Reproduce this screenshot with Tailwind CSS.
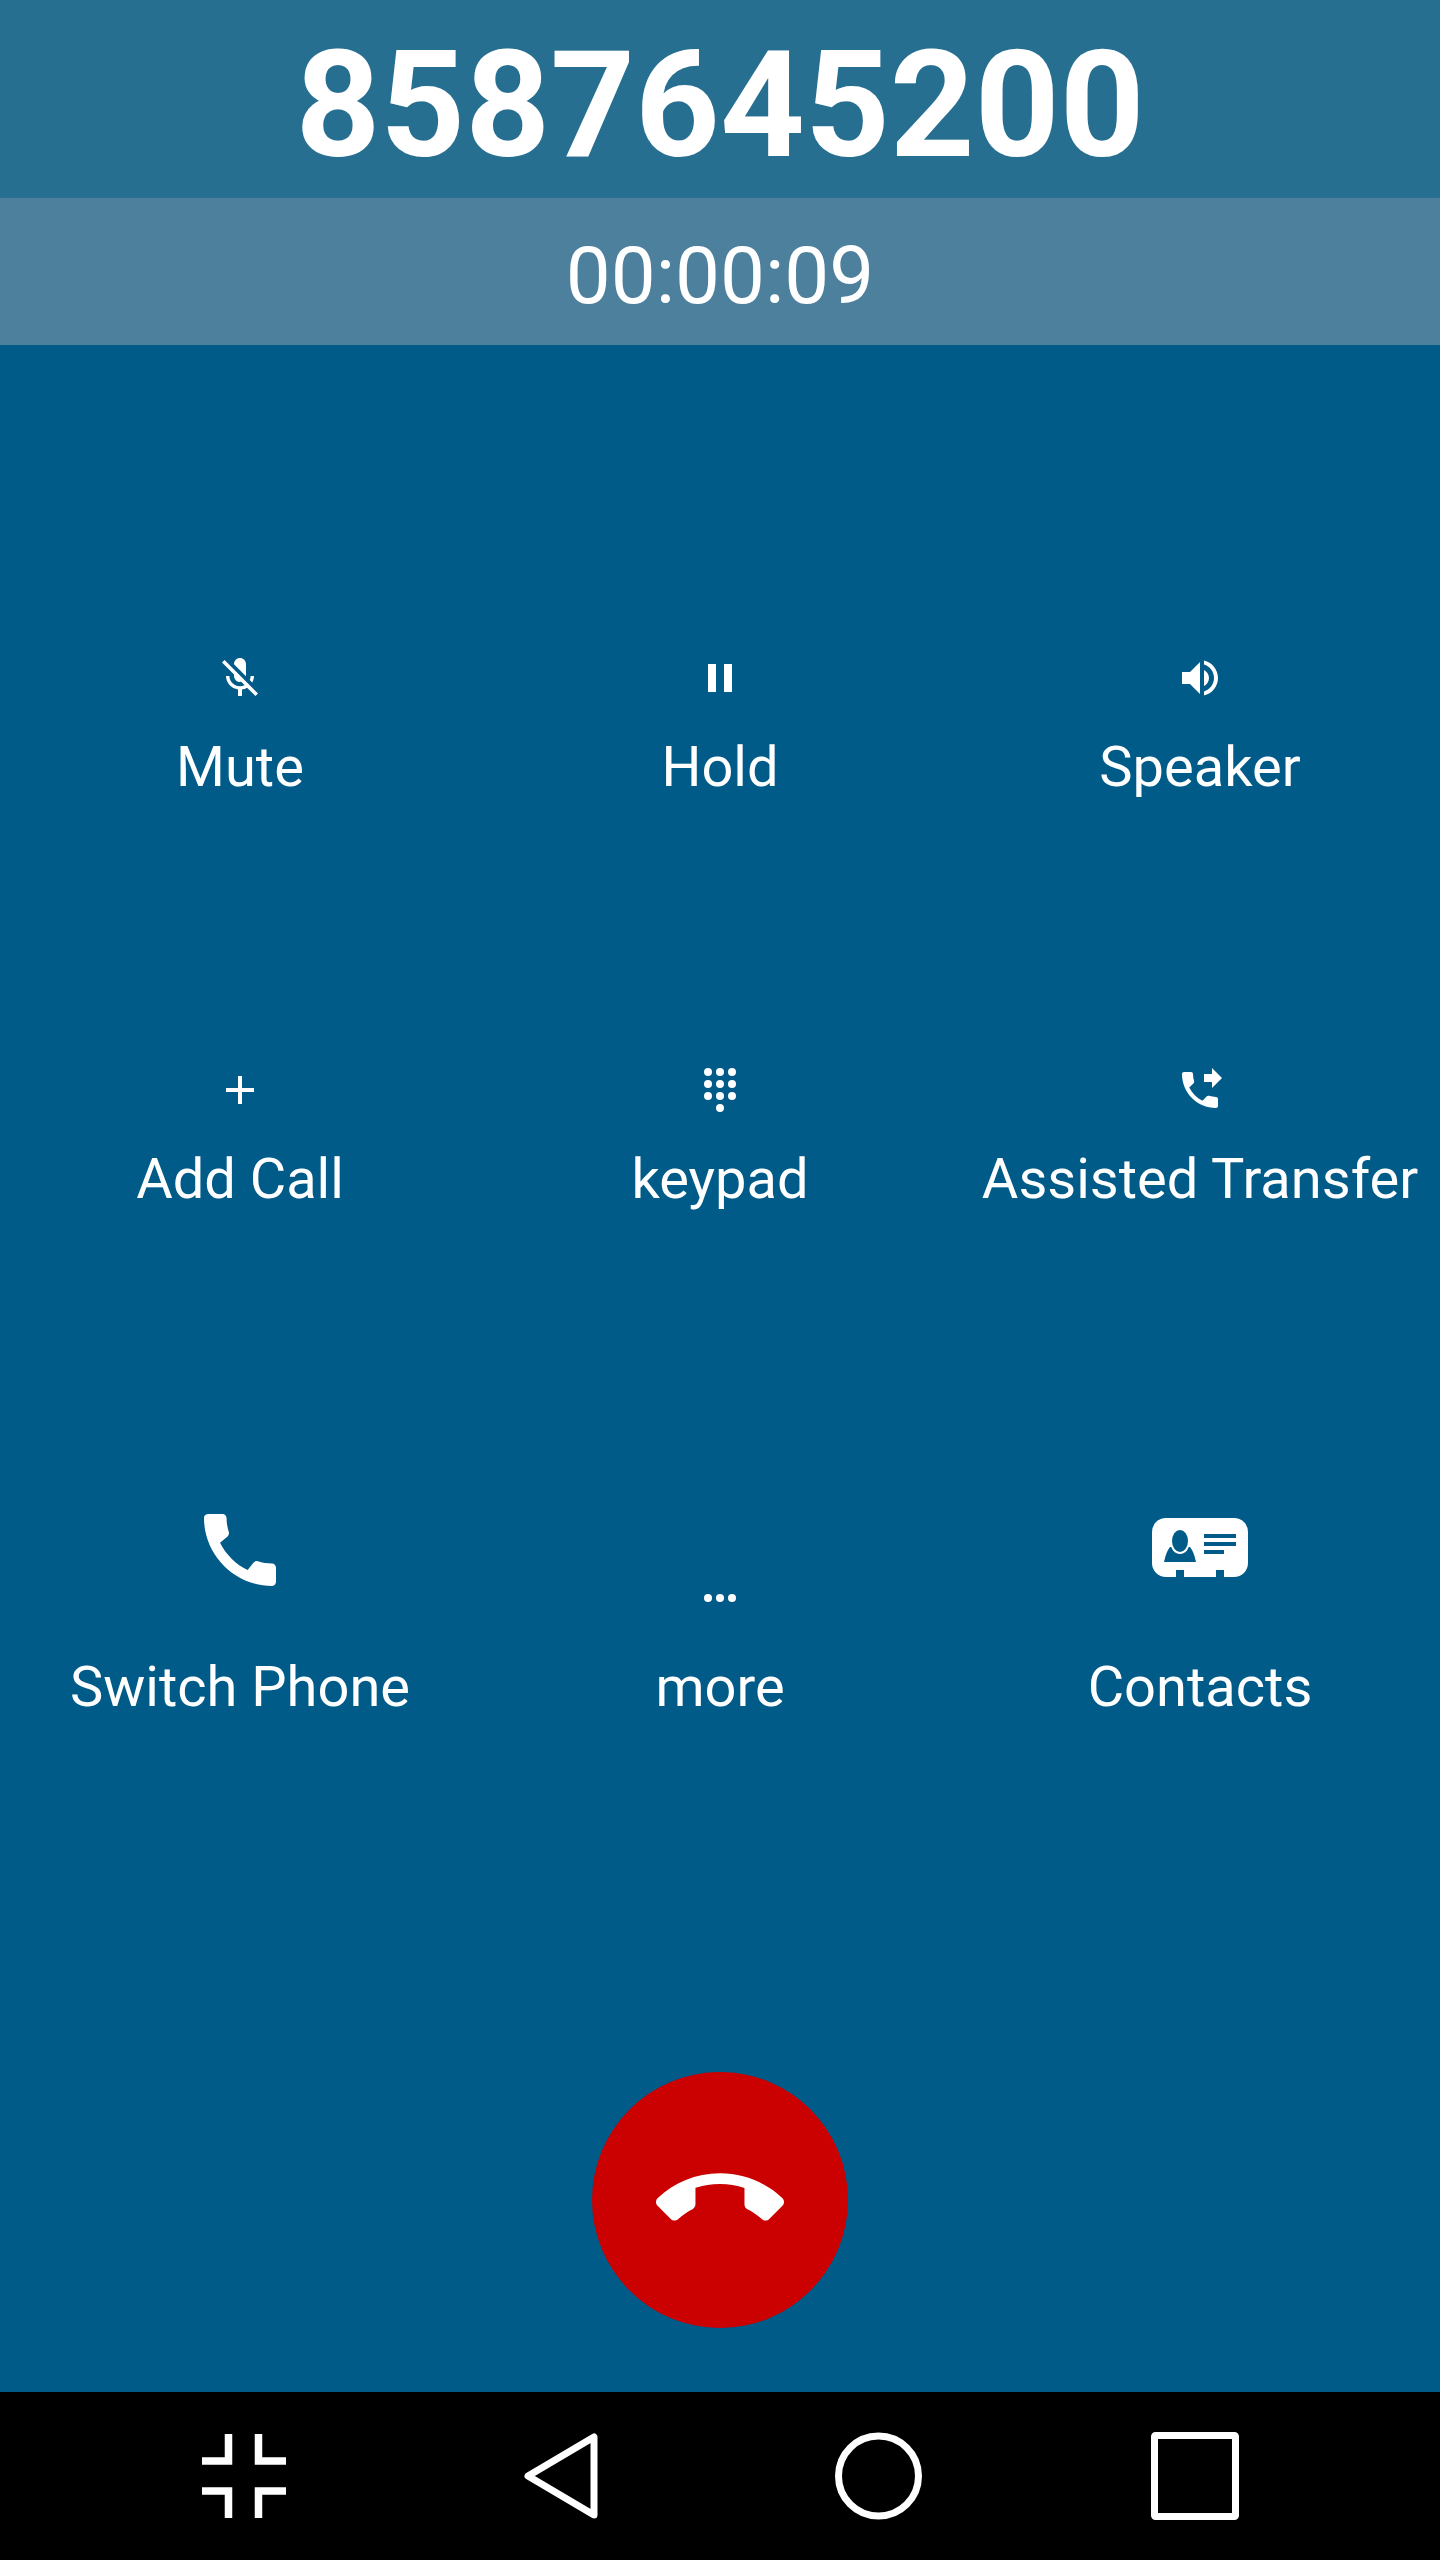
<!DOCTYPE html>
<html lang="en">
  <head>
    <meta charset="utf-8" />
    <title>Call</title>
    <script src="https://cdn.jsdelivr.net/npm/@tailwindcss/browser@4"></script>
  </head>
  <body>
    <div class="flex h-[2560px] w-[1440px] flex-col bg-[#005b88] font-['Roboto',sans-serif] text-white">
      <!-- Number and timer -->
      <div class="flex h-[198px] items-center justify-center bg-[#276f91] pt-[13px] text-[148px] leading-none font-bold">8587645200</div>
      <div class="flex h-[147px] items-center justify-center bg-[#4d809d] pt-[8px] text-[80px] leading-none">00:00:09</div>

      <!-- Actions -->
      <div class="flex-1">
        <div class="mt-[309px] grid grid-cols-3">
          <div class="flex flex-col items-center">
            <svg class="h-12 w-12" viewBox="0 0 24 24" fill="#fff"><path d="M19 11h-1.7c0 .74-.16 1.43-.43 2.05l1.23 1.23c.56-.98.9-2.09.9-3.28zm-4.02.17c0-.06.02-.11.02-.17V5c0-1.66-1.34-3-3-3s-3 1.34-3 3v.18l5.98 5.99zM4.27 3L3 4.27l6.01 6.01V11c0 1.66 1.33 3 2.99 3 .22 0 .44-.03.65-.08l1.66 1.66c-.71.33-1.5.52-2.31.52-2.76 0-5.3-2.1-5.3-5.1H5c0 3.41 2.72 6.23 6 6.72V21h2v-3.28c.91-.13 1.77-.45 2.54-.9L19.73 21 21 19.73 4.27 3z"/></svg>
            <span class="mt-[33px] text-[56px] leading-[64px]">Mute</span>
          </div>
          <div class="flex flex-col items-center">
            <svg class="h-12 w-12" viewBox="0 0 24 24" fill="#fff"><path d="M6 19h4V5H6v14zm8-14v14h4V5h-4z"/></svg>
            <span class="mt-[33px] text-[56px] leading-[64px]">Hold</span>
          </div>
          <div class="flex flex-col items-center">
            <svg class="h-12 w-12" viewBox="0 0 24 24" fill="#fff"><path d="M3 9v6h4l5 5V4L7 9H3zm13.5 3c0-1.77-1.02-3.29-2.5-4.03v8.05c1.48-.73 2.5-2.25 2.5-4.02zM14 3.23v2.06c2.89.86 5 3.54 5 6.71s-2.11 5.85-5 6.71v2.06c4.01-.91 7-4.49 7-8.77s-2.99-7.86-7-8.77z"/></svg>
            <span class="mt-[33px] text-[56px] leading-[64px]">Speaker</span>
          </div>
        </div>

        <div class="mt-[267px] grid grid-cols-3">
          <div class="flex flex-col items-center">
            <svg class="h-12 w-12" viewBox="0 0 24 24" fill="#fff"><path d="M19 13h-6v6h-2v-6H5v-2h6V5h2v6h6v2z"/></svg>
            <span class="mt-[33px] text-[56px] leading-[64px]">Add Call</span>
          </div>
          <div class="flex flex-col items-center">
            <svg class="h-12 w-12" viewBox="0 0 24 24" fill="#fff"><circle cx="6" cy="3" r="2"/><circle cx="12" cy="3" r="2"/><circle cx="18" cy="3" r="2"/><circle cx="6" cy="9" r="2"/><circle cx="12" cy="9" r="2"/><circle cx="18" cy="9" r="2"/><circle cx="6" cy="15" r="2"/><circle cx="12" cy="15" r="2"/><circle cx="18" cy="15" r="2"/><circle cx="12" cy="21" r="2"/></svg>
            <span class="mt-[33px] text-[56px] leading-[64px]">keypad</span>
          </div>
          <div class="flex flex-col items-center">
            <svg class="h-12 w-12" viewBox="0 0 24 24" fill="#fff"><path d="M18 11l5-5-5-5v3h-4v4h4v3zm2 4.5c-1.25 0-2.45-.2-3.57-.57-.35-.11-.74-.03-1.02.24l-2.2 2.2c-2.83-1.44-5.15-3.75-6.59-6.59l2.2-2.21c.28-.26.36-.65.25-1C8.7 6.45 8.5 5.25 8.5 4c0-.55-.45-1-1-1H4c-.55 0-1 .45-1 1 0 9.39 7.61 17 17 17 .55 0 1-.45 1-1v-3.5c0-.55-.45-1-1-1z"/></svg>
            <span class="mt-[33px] text-[56px] leading-[64px]">Assisted Transfer</span>
          </div>
        </div>

        <div class="mt-[291px] grid grid-cols-3">
          <div class="flex flex-col items-center justify-end">
            <svg class="h-24 w-24" viewBox="0 0 24 24" fill="#fff"><path d="M20.01 15.38c-1.23 0-2.42-.2-3.53-.56-.35-.12-.74-.03-1.01.24l-1.57 1.97c-2.83-1.35-5.48-3.9-6.89-6.83l1.95-1.66c.27-.28.35-.67.24-1.02-.37-1.11-.56-2.3-.56-3.53 0-.54-.45-.99-.99-.99H4.19C3.65 3 3 3.24 3 3.99 3 13.28 10.73 21 20.01 21c.71 0 .99-.63.99-1.18v-3.45c0-.54-.45-.99-.99-.99z"/></svg>
            <span class="mt-[57px] text-[56px] leading-[64px]">Switch Phone</span>
          </div>
          <div class="flex flex-col items-center justify-end">
            <svg class="h-12 w-12" viewBox="0 0 24 24" fill="#fff"><circle cx="6" cy="12" r="2"/><circle cx="12" cy="12" r="2"/><circle cx="18" cy="12" r="2"/></svg>
            <span class="mt-[33px] text-[56px] leading-[64px]">more</span>
          </div>
          <div class="flex flex-col items-center justify-end">
            <svg class="h-24 w-24" viewBox="0 0 96 96">
              <rect x="0" y="16" width="96" height="59" rx="14" fill="#fff"/>
              <path d="M24 68h8v8h-8zM64 68h8v8h-8zM52 32h32v4H52zM52 40h32v4H52zM52 48h20v4H52z" fill="#005b88"/>
              <path d="M12 60Q14 50 18 45L38 45Q42 50 44 60Z" fill="#005b88"/>
              <ellipse cx="28" cy="39" rx="10" ry="13" fill="#fff"/>
              <ellipse cx="28" cy="39" rx="8" ry="11" fill="#005b88"/>
            </svg>
            <span class="mt-[57px] text-[56px] leading-[64px]">Contacts</span>
          </div>
        </div>

        <!-- End call -->
        <div class="mt-[353px] flex justify-center">
          <button class="flex h-64 w-64 items-center justify-center rounded-full bg-[#cb0000]">
            <svg class="h-32 w-32" viewBox="0 0 24 24" fill="#fff"><path d="M12 9c-1.6 0-3.15.25-4.6.72v3.1c0 .39-.23.74-.56.9-.98.49-1.87 1.12-2.66 1.85-.18.18-.43.28-.7.28-.28 0-.53-.11-.71-.29L.29 13.08c-.18-.17-.29-.42-.29-.7 0-.28.11-.53.29-.71C3.34 8.78 7.46 7 12 7s8.66 1.78 11.71 4.67c.18.18.29.43.29.71 0 .28-.11.53-.29.71l-2.48 2.48c-.18.18-.43.29-.71.29-.27 0-.52-.11-.7-.28-.79-.74-1.69-1.36-2.67-1.85-.33-.16-.56-.5-.56-.9v-3.1C15.15 9.25 13.6 9 12 9z"/></svg>
          </button>
        </div>
      </div>

      <!-- Navigation bar -->
      <div class="flex h-[168px] items-center bg-black pl-[202px]">
        <svg class="h-[84px] w-[84px]" viewBox="0 0 84 84" fill="none" stroke="#fff" stroke-width="7.5"><path d="M26.5 0V27H0M56.5 0V27H84M26.5 84V57H0M56.5 84V57H84"/></svg>
        <svg class="ml-[237px] h-[88px] w-[75px]" viewBox="0 0 75 88" fill="none" stroke="#fff" stroke-width="7" stroke-linejoin="round"><path d="M71 5V83L5 44Z"/></svg>
        <svg class="ml-[237px] h-[88px] w-[87px]" viewBox="0 0 87 88" fill="none" stroke="#fff" stroke-width="7"><circle cx="43.5" cy="44" r="40"/></svg>
        <svg class="ml-[229px] h-[88px] w-[88px]" viewBox="0 0 88 88" fill="none" stroke="#fff" stroke-width="7" stroke-linejoin="round"><rect x="3.5" y="3.5" width="81" height="81" rx="1"/></svg>
      </div>
    </div>
  </body>
</html>
